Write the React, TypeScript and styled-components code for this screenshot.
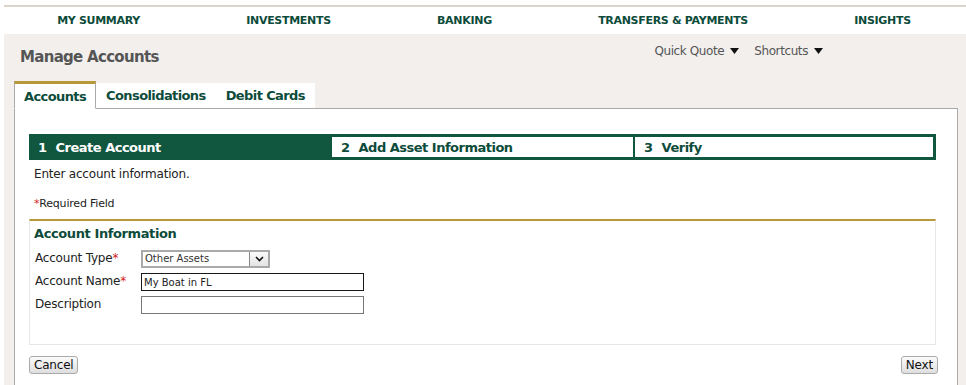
import { createGlobalStyle, styled } from 'styled-components';

const green = '#11573f';
const navGreen = '#0d4b3a';
const gold = '#b8993a';
const font = `Verdana, "DejaVu Sans", sans-serif`;

const GlobalStyle = createGlobalStyle`
  body {
    margin: 0;
    background: #ffffff;
    font-family: ${font};
    color: #222;
    overflow: hidden;
  }
`;

const navItems = [
  'MY SUMMARY',
  'INVESTMENTS',
  'BANKING',
  'TRANSFERS & PAYMENTS',
  'INSIGHTS',
];

const steps = ['Create Account', 'Add Asset Information', 'Verify'];

const Caret = () => (
  <svg width="9" height="6" viewBox="0 0 9 6">
    <polygon points="0,0 9,0 4.5,6" fill="#111" />
  </svg>
);

const Chevron = () => (
  <svg width="9" height="6" viewBox="0 0 9 6">
    <polyline points="1,1 4.5,4.5 8,1" fill="none" stroke="#111" strokeWidth="1.6" />
  </svg>
);

const App: React.FC = (): JSX.Element => {
  return (
    <>
      <GlobalStyle />
      <Page>
        <TopRule />
        <MainNav>
          {navItems.map((item) => (
            <NavItem key={item}>{item}</NavItem>
          ))}
        </MainNav>
        <Shell>
          <PageHeader>
            <PageTitle>Manage Accounts</PageTitle>
            <Utilities>
              <UtilityLink>
                Quick Quote <Caret />
              </UtilityLink>
              <UtilityLink>
                Shortcuts <Caret />
              </UtilityLink>
            </Utilities>
          </PageHeader>
          <Tabs>
            <Tab $active>Accounts</Tab>
            <Tab>Consolidations</Tab>
            <Tab>Debit Cards</Tab>
            <TabFiller />
          </Tabs>
          <Panel>
            <Stepper>
              {steps.map((step, i) => (
                <Step key={step} $active={i === 0}>
                  <StepNumber>{i + 1}</StepNumber>
                  {step}
                </Step>
              ))}
            </Stepper>
            <Intro>Enter account information.</Intro>
            <RequiredNote>
              <Star>*</Star>Required Field
            </RequiredNote>
            <Section>
              <SectionTitle>Account Information</SectionTitle>
              <FormRow>
                <Label>
                  Account Type<Star>*</Star>
                </Label>
                <SelectBox>
                  <SelectText>Other Assets</SelectText>
                  <SelectButton>
                    <Chevron />
                  </SelectButton>
                </SelectBox>
              </FormRow>
              <FormRow>
                <Label>
                  Account Name<Star>*</Star>
                </Label>
                <TextInput $focused defaultValue="My Boat in FL" />
              </FormRow>
              <FormRow>
                <Label>Description</Label>
                <TextInput />
              </FormRow>
            </Section>
            <Actions>
              <Button>Cancel</Button>
              <Button>Next</Button>
            </Actions>
          </Panel>
        </Shell>
      </Page>
    </>
  );
};

const Page = styled.div`
  margin-left: 4px;
  padding-top: 5px;
`;

const TopRule = styled.div`
  height: 2px;
  background: #dcd3cb;
`;

const MainNav = styled.nav`
  display: flex;
  justify-content: space-around;
  align-items: center;
  height: 27px;
  background: #ffffff;
  padding: 0 2px 0 0;
`;

const NavItem = styled.a`
  font-size: 11px;
  font-weight: bold;
  color: ${navGreen};
  letter-spacing: -0.3px;
  cursor: pointer;
`;

const Shell = styled.div`
  background: #f2efed;
  padding: 0 8px 0 10px;
  height: 351px;
`;

const PageHeader = styled.div`
  display: flex;
  justify-content: space-between;
  height: 47px;
`;

const PageTitle = styled.h1`
  margin: 14px 0 0 6px;
  font-size: 15px;
  font-weight: bold;
  color: #555;
  letter-spacing: -0.7px;
`;

const Utilities = styled.div`
  display: flex;
  gap: 15px;
  margin: 10px 135px 0 0;
  align-self: flex-start;
`;

const UtilityLink = styled.span`
  display: flex;
  align-items: center;
  gap: 6px;
  font-size: 12px;
  color: #555;
  letter-spacing: -0.4px;
  cursor: pointer;
`;

const Tabs = styled.div`
  display: flex;
  align-items: flex-end;
  height: 27px;
`;

const Tab = styled.div<{ $active?: boolean }>`
  display: flex;
  align-items: center;
  height: ${({ $active }) => ($active ? '24px' : '25px')};
  padding: 0 ${({ $active }) => ($active ? '9px' : '10px')};
  background: #ffffff;
  border-top: ${({ $active }) => ($active ? `3px solid ${gold}` : 'none')};
  border-left: ${({ $active }) => ($active ? '1px solid #aaa' : 'none')};
  border-right: ${({ $active }) => ($active ? '1px solid #aaa' : 'none')};
  border-bottom: ${({ $active }) => ($active ? '1px solid #fff' : '1px solid #aaa')};
  font-size: 13px;
  font-weight: bold;
  color: ${navGreen};
  letter-spacing: -0.6px;
  margin-bottom: -1px;
  position: relative;
  z-index: 1;
`;

const TabFiller = styled.div`
  flex: 1;
`;

const Panel = styled.div`
  box-sizing: border-box;
  background: #ffffff;
  border: 1px solid #aaa;
  border-bottom: none;
  padding: 26px 21px 0 14px;
  height: 277px;
`;

const Stepper = styled.div`
  display: grid;
  grid-template-columns: 298px 303px 1fr;
  border: 3px solid ${green};
  height: 20px;
  margin-top: -1px;
`;

const Step = styled.div<{ $active: boolean }>`
  display: flex;
  align-items: center;
  padding-left: ${({ $active }) => ($active ? '6px' : '9px')};
  background: ${({ $active }) => ($active ? green : '#fff')};
  color: ${({ $active }) => ($active ? '#fff' : navGreen)};
  border-left: ${({ $active }) => ($active ? 'none' : `2px solid ${green}`)};
  font-size: 13px;
  font-weight: bold;
  letter-spacing: -0.5px;
`;

const StepNumber = styled.span`
  margin-right: 9px;
`;

const Intro = styled.p`
  margin: 7px 0 0 5px;
  font-size: 12px;
  color: #222;
  letter-spacing: -0.2px;
`;

const RequiredNote = styled.p`
  margin: 16px 0 0 5px;
  font-size: 11px;
  color: #222;
  letter-spacing: -0.2px;
`;

const Star = styled.span`
  color: #d42020;
`;

const Section = styled.div`
  margin-top: 9px;
  border-top: 2px solid ${gold};
  height: 126px;
  box-sizing: border-box;
  border-left: 1px solid #e6e6e6;
  border-right: 1px solid #e6e6e6;
  border-bottom: 1px solid #e6e6e6;
  padding: 5px 0 0 4px;
`;

const SectionTitle = styled.h2`
  margin: 0 0 10px 0;
  font-size: 13px;
  font-weight: bold;
  color: ${navGreen};
  letter-spacing: -0.4px;
`;

const FormRow = styled.div`
  display: flex;
  align-items: flex-start;
  height: 23px;
`;

const Label = styled.label`
  width: 106px;
  padding-left: 1px;
  font-size: 12px;
  color: #222;
  line-height: 15px;
  letter-spacing: -0.2px;
`;

const SelectBox = styled.div`
  display: flex;
  align-items: stretch;
  width: 125px;
  height: 14px;
  border: 2px solid #a9a9a9;
  background: #fff;
  margin-top: -1px;
`;

const SelectText = styled.span`
  flex: 1;
  font-size: 10px;
  line-height: 14px;
  padding-left: 2px;
  color: #333;
`;

const SelectButton = styled.span`
  display: flex;
  align-items: center;
  justify-content: center;
  width: 18px;
  border-left: 1px solid #888;
  background: linear-gradient(#fafafa, #e4e4e4);
`;

const TextInput = styled.input<{ $focused?: boolean }>`
  box-sizing: border-box;
  width: 223px;
  height: 18px;
  margin: -1px 0 0 0;
  padding: 0 2px;
  border: 1px solid ${({ $focused }) => ($focused ? '#1a1a1a' : '#777')};
  font-family: ${font};
  font-size: 10px;
  color: #222;
  outline: none;
`;

const Actions = styled.div`
  display: flex;
  justify-content: space-between;
  margin: 11px -2px 0 0;
`;

const Button = styled.button`
  height: 18px;
  padding: 0 4px;
  border: 1px solid #aaa;
  border-radius: 3px;
  background: linear-gradient(#fbfbfb, #dedede);
  font-family: ${font};
  font-size: 12px;
  color: #111;
  line-height: 14px;
  letter-spacing: -0.2px;
`;

export default App;
